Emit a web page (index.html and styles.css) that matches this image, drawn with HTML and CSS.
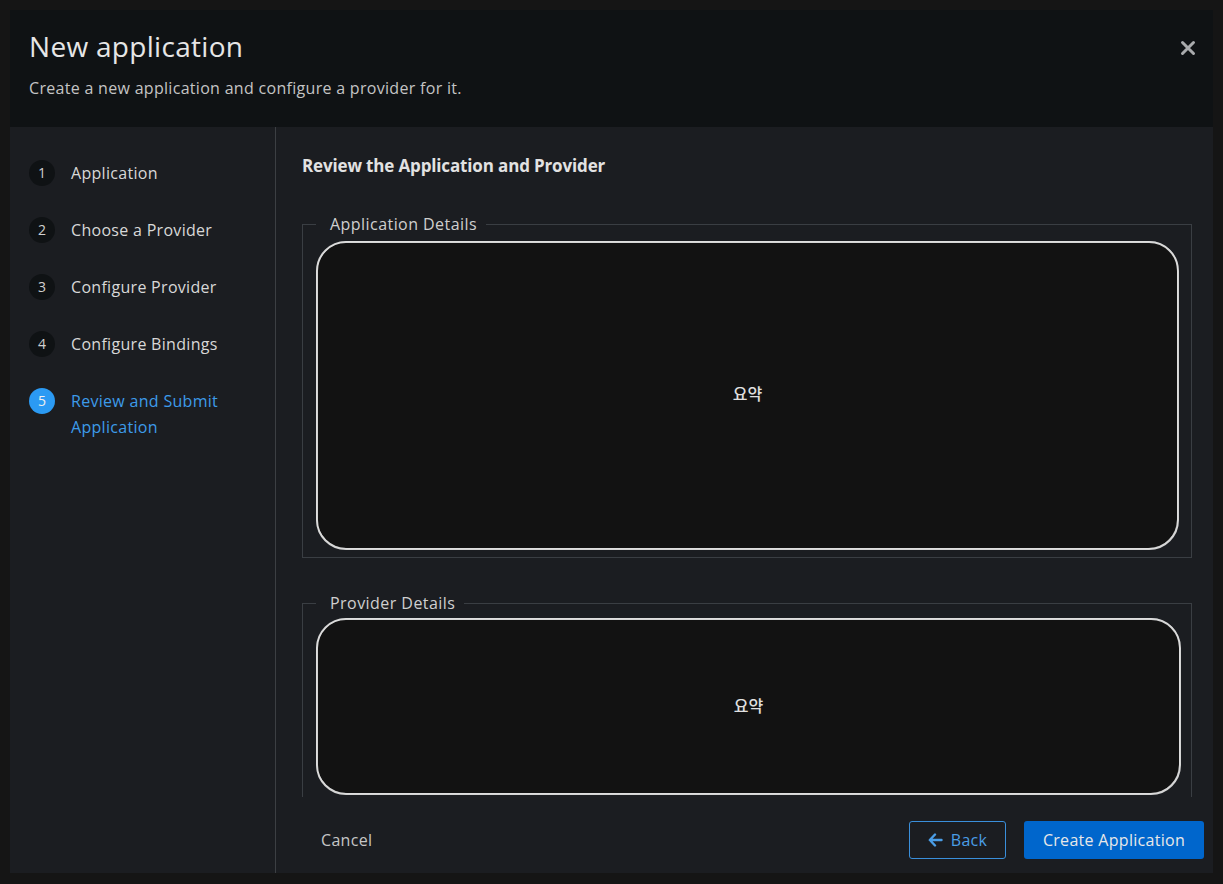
FILE: index.html
```html
<!DOCTYPE html>
<html lang="en">
<head>
  <meta charset="UTF-8" />
  <title>New application</title>
  <meta name="viewport" content="width=device-width, initial-scale=1" />
  <link rel="stylesheet" href="styles.css">
</head>
<body>

  <div class="modal">

    <!-- Header -->
    <div class="modal-header">
      <div>
        <h1 class="modal-title">New application</h1>
        <p class="modal-desc">Create a new application and configure a provider for it.</p>
      </div>
      <button class="close-btn" aria-label="Close">
        <svg width="16" height="16" viewBox="0 0 16 16">
          <path d="M2.5 2.5 L13.5 13.5 M13.5 2.5 L2.5 13.5" stroke="#a9abad" stroke-width="3" stroke-linecap="round" />
        </svg>
      </button>
    </div>

    <div class="wizard">

      <!-- Steps -->
      <ol class="steps">
        <li class="step"><span class="step-num">1</span><span class="step-label">Application</span></li>
        <li class="step"><span class="step-num">2</span><span class="step-label">Choose a Provider</span></li>
        <li class="step"><span class="step-num">3</span><span class="step-label">Configure Provider</span></li>
        <li class="step"><span class="step-num">4</span><span class="step-label">Configure Bindings</span></li>
        <li class="step current"><span class="step-num">5</span><span class="step-label">Review and Submit Application</span></li>
      </ol>

      <div class="wizard-main">
        <div class="review">
          <h2>Review the Application and Provider</h2>

          <fieldset class="details app-details">
            <legend>Application Details</legend>
            <div class="summary-box">요약</div>
          </fieldset>

          <fieldset class="details provider-details">
            <legend>Provider Details</legend>
            <div class="summary-box">요약</div>
          </fieldset>
        </div>

        <div class="wizard-footer">
          <button class="btn btn-link">Cancel</button>
          <button class="btn btn-secondary">
            <svg width="15" height="14" viewBox="0 0 15 14">
              <path d="M7 1.5 L1.8 7 L7 12.5 M2 7 H13.5" fill="none" stroke="#4a9de6" stroke-width="2.4" stroke-linecap="round" stroke-linejoin="round" />
            </svg>
            Back
          </button>
          <button class="btn btn-primary">Create Application</button>
        </div>
      </div>

    </div>
  </div>

</body>
</html>
```

FILE: styles.css
```css
body {
  margin: 0;
  background-color: #151515;
  font-family: 'Open Sans', 'Noto Sans', sans-serif;
  letter-spacing: 0.3px;
  color: #d2d2d2;
  height: 884px;
  overflow: hidden;
}

.modal {
  margin: 10px;
  width: 1203px;
  height: 863px;
  display: flex;
  flex-direction: column;
  background-color: #1b1d21;
}

/* Header */
.modal-header {
  height: 117px;
  box-sizing: border-box;
  padding: 18px 17px 0 19px;
  background-color: #0f1214;
  display: flex;
  justify-content: space-between;
  align-items: flex-start;
}
.modal-title {
  margin: 0;
  font-size: 28px;
  line-height: 36px;
  font-weight: 400;
  color: #e6e6e6;
  letter-spacing: 0.3px;
}
.modal-desc {
  margin: 12px 0 0;
  font-size: 16px;
  line-height: 24px;
  color: #c4c4c4;
}
.close-btn {
  background: none;
  border: none;
  padding: 0;
  margin-top: 12px;
  width: 16px;
  height: 16px;
  cursor: pointer;
}

/* Wizard body */
.wizard {
  flex: 1;
  display: flex;
  min-height: 0;
}

.steps {
  list-style: none;
  margin: 0;
  width: 266px;
  box-sizing: border-box;
  padding: 33px 12px 0 19px;
  border-right: 1px solid #3c3f43;
  display: flex;
  flex-direction: column;
  gap: 31px;
}
.step {
  display: flex;
  align-items: flex-start;
  gap: 16px;
  font-size: 16px;
  line-height: 26px;
  color: #d8d8d8;
}
.step-num {
  flex: none;
  width: 26px;
  height: 26px;
  border-radius: 50%;
  background-color: #0f1214;
  color: #d0d0d0;
  font-size: 14px;
  letter-spacing: 0;
  text-align: center;
  line-height: 26px;
}
.step.current .step-num {
  background-color: #2b9af3;
  color: #f0f0f0;
}
.step.current .step-label {
  color: #3d9be9;
  width: 160px;
}

.wizard-main {
  flex: 1;
  display: flex;
  flex-direction: column;
  min-width: 0;
}

.review {
  flex: 1;
  overflow: hidden;
  padding: 27px 21px 0 26px;
}
.review h2 {
  margin: 0 0 36px;
  font-size: 17px;
  line-height: 24px;
  font-weight: 700;
  color: #e2e2e2;
  letter-spacing: -0.15px;
}

.details {
  margin: 0;
  border: 1px solid #3a3e43;
  padding: 0 12px 7px 13px;
}
.details legend {
  padding: 0 9px 0 14px;
  font-size: 16px;
  line-height: 20px;
  letter-spacing: 0.45px;
  color: #cfcfcf;
}
.provider-details {
  margin-top: 35px;
}

.summary-box {
  position: relative;
  margin-top: 7px;
  height: 305px;
  padding-bottom: 6px;
  box-sizing: content-box;
  border: 2px solid #d4d4d4;
  border-radius: 30px;
  background-color: #121212;
  display: flex;
  align-items: center;
  justify-content: center;
  font-family: 'Noto Sans CJK KR', sans-serif;
  font-size: 16px;
  font-weight: 500;
  letter-spacing: 0;
  color: #e0e0e0;
}
.summary-box::after {
  content: '';
  position: absolute;
  inset: -2px -1px -1px -2px;
  border: 1px solid rgb(235 235 235 / 0.45);
  border-radius: 32px 28px 30px 31px;
  pointer-events: none;
}
.app-details .summary-box {
  height: 299px;
}
.provider-details .summary-box {
  margin-top: 5px;
  height: 169px;
  padding-bottom: 4px;
  margin-right: -2px;
}

/* Footer */
.wizard-footer {
  height: 76px;
  box-sizing: border-box;
  padding: 24px 9px 14px 26px;
  display: flex;
  align-items: center;
  gap: 18px;
}
.btn {
  height: 38px;
  box-sizing: border-box;
  font-family: inherit;
  font-size: 16px;
  letter-spacing: 0.3px;
  border-radius: 3px;
  cursor: pointer;
  display: flex;
  align-items: center;
  justify-content: center;
  gap: 8px;
}
.btn-link {
  background: none;
  border: none;
  padding: 0 18px 0 19px;
  color: #c6c6c6;
  margin-right: auto;
}
.btn-secondary {
  width: 97px;
  background: none;
  border: 1px solid #3a8fdb;
  color: #4a9de6;
}
.btn-primary {
  width: 180px;
  border: none;
  background-color: #0066cc;
  color: #e8e8e8;
}
```
